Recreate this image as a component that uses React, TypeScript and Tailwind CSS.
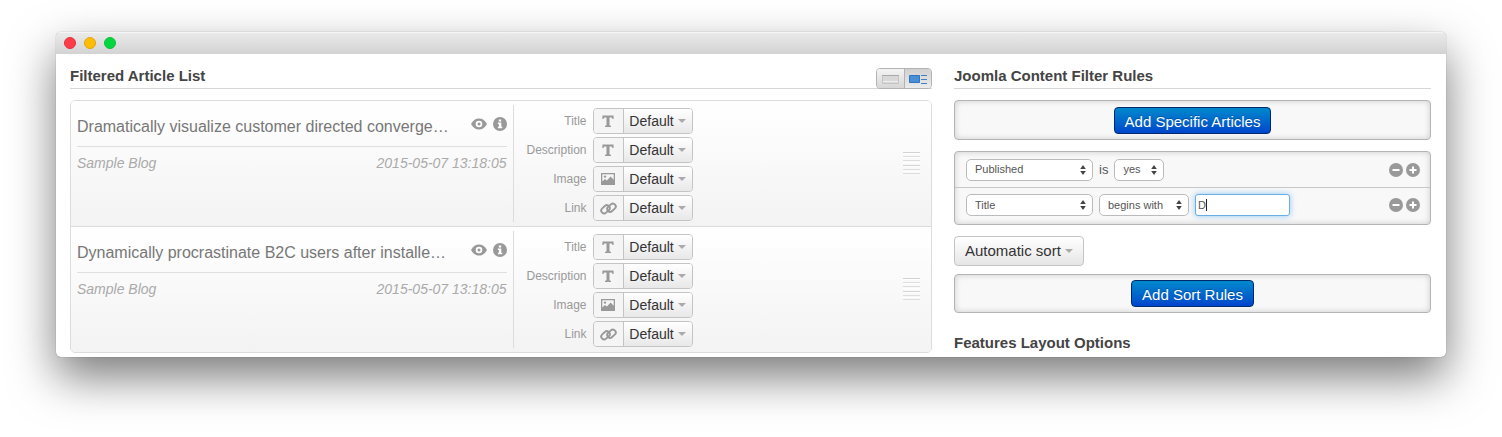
import { useId, type ReactNode } from "react";

const TextIcon = () => (
  <svg width="14" height="14" viewBox="0 0 14 14" fill="#999" aria-hidden="true">
    <path d="M1.500 1.500h11l.2 3.600h-1.200c-.3-1.100-.8-1.500-1.800-1.500H8.500v7.200c0 .7.3.9 1.500 1V13H4v-1.200c1.200-.1 1.500-.3 1.500-1V3.600H4.300c-1 0-1.500.4-1.800 1.500H1.300z" />
  </svg>
);

const ImageIcon = () => (
  <svg width="14" height="14" viewBox="0 0 14 14" aria-hidden="true">
    <path fill="#999" fillRule="evenodd" d="M0 1h14v12H0zM1.300 2.300v7.200l2.600-2.400 2 1.400 3.700-4 3.100 3.200V2.300z" />
    <circle cx="4" cy="4.600" r="1.200" fill="#999" />
  </svg>
);

const LinkIcon = () => (
  <svg width="17" height="13" viewBox="0 0 17 13" fill="none" stroke="#999" strokeWidth="1.900" aria-hidden="true">
    <rect x="0.800" y="4.400" width="9.400" height="5.800" rx="2.900" transform="rotate(-42 5.500 7.300)" />
    <rect x="6.800" y="2.800" width="9.400" height="5.800" rx="2.900" transform="rotate(-42 11.500 5.700)" />
  </svg>
);

const EyeIcon = () => (
  <svg width="16" height="12" viewBox="0 0 16 12" aria-hidden="true">
    <path fill="#999" d="M0 6C2.200 2.300 4.800.5 8 .5S13.800 2.300 16 6c-2.200 3.700-4.800 5.500-8 5.500S2.200 9.700 0 6z" />
    <circle cx="8" cy="6" r="3.300" fill="#fff" />
    <circle cx="8" cy="6" r="1.500" fill="#999" />
  </svg>
);

const InfoIcon = () => (
  <svg width="14" height="14" viewBox="0 0 14 14" aria-hidden="true">
    <circle cx="7" cy="7" r="7" fill="#999" />
    <path fill="#fff" d="M5.800 2.500h2.400v2H5.800zM4.900 5.400h3.400v4.300h1v1.600H4.900V9.700h1V7h-1z" />
  </svg>
);

const CircleIcon = ({ plus = false }: { plus?: boolean }) => (
  <svg width="14" height="14" viewBox="0 0 14 14" aria-hidden="true">
    <circle cx="7" cy="7" r="7" fill="#999" />
    <path stroke="#fff" strokeWidth="2" d={plus ? "M3.500 7h7M7 3.500v7" : "M3.500 7h7"} />
  </svg>
);

const Caret = () => (
  <svg width="8" height="4" viewBox="0 0 8 4" fill="#aaa" aria-hidden="true">
    <path d="M0 0h8L4 4z" />
  </svg>
);

const fields: { label: string; icon: ReactNode }[] = [
  { label: "Title", icon: <TextIcon /> },
  { label: "Description", icon: <TextIcon /> },
  { label: "Image", icon: <ImageIcon /> },
  { label: "Link", icon: <LinkIcon /> },
];

const articles = [
  "Dramatically visualize customer directed converge…",
  "Dynamically procrastinate B2C users after installe…",
];

function Field({ label, icon }: { label: string; icon: ReactNode }) {
  const id = useId();
  return (
    <div className="flex items-center gap-1.5">
      <label htmlFor={id} className="w-[73px] text-right text-xs text-[#999]">
        {label}
      </label>
      <div className="flex h-[26px] w-[100px] overflow-hidden rounded border border-[#c4c4c4]">
        <span className="flex w-[29px] shrink-0 items-center justify-center bg-[#f5f5f5]">{icon}</span>
        <button
          id={id}
          type="button"
          className="flex flex-1 items-center justify-center gap-1 border-l border-[#c4c4c4] bg-linear-to-b from-white to-[#e8e8e8] text-sm text-[#333]"
        >
          Default <Caret />
        </button>
      </div>
    </div>
  );
}

function Article({ title }: { title: string }) {
  return (
    <li className="flex h-[126px] items-stretch border-b border-[#dcdcdc] bg-linear-to-b from-white to-[#f3f3f3] pl-1.5 last:h-[125px] last:border-b-0">
      <div className="min-w-0 flex-1">
        <div className="flex h-[46px] items-center gap-1.5 border-b border-[#dfdfdf] pt-1.5">
          <h2 className="min-w-0 flex-1 truncate text-base text-[#777]">{title}</h2>
          <button type="button" aria-label="Preview" className="pb-1.5">
            <EyeIcon />
          </button>
          <button type="button" aria-label="Information" className="pb-1.5">
            <InfoIcon />
          </button>
        </div>
        <div className="flex justify-between pt-1.5 text-sm text-[#aaa] italic">
          <span>Sample Blog</span>
          <time>2015-05-07 13:18:05</time>
        </div>
      </div>
      <div className="my-1 ml-1.5 flex w-[49%] items-center justify-between border-l border-[#dcdcdc] pr-[11px]">
        <div className="flex h-[116px] flex-col justify-between pt-0.5">
          {fields.map((f) => (
            <Field key={f.label} {...f} />
          ))}
        </div>
        <svg width="17" height="23" viewBox="0 0 17 23" className="shrink-0" aria-hidden="true">
          <path stroke="#fff" d="M0 1.500h17M0 5.500h17M0 10.500h17M0 14.500h17M0 19.500h17" />
          <path stroke="#d2d2d2" d="M0 .5h17M0 13.500h17" />
          <path stroke="#dedede" d="M0 4.500h17M0 8.500h17M0 17.500h17M0 21.500h17" />
        </svg>
      </div>
    </li>
  );
}

function RuleSelect({ label, value, width }: { label: string; value: string; width: string }) {
  return (
    <span className={`relative flex h-[22px] ${width}`}>
      <select
        aria-label={label}
        defaultValue={value}
        className="w-full appearance-none rounded-[5px] border border-[#bbb] bg-white pl-2 text-[11px] text-[#555]"
      >
        <option>{value}</option>
      </select>
      <svg width="6" height="10" viewBox="0 0 6 10" fill="#444" className="pointer-events-none absolute top-1.5 right-[7px]" aria-hidden="true">
        <path d="M3 0l2.800 4H.2zM3 10L.2 6h5.600z" />
      </svg>
    </span>
  );
}

function RuleActions() {
  return (
    <div className="ml-auto flex gap-[3px]">
      <button type="button" aria-label="Remove rule">
        <CircleIcon />
      </button>
      <button type="button" aria-label="Add rule">
        <CircleIcon plus />
      </button>
    </div>
  );
}

const panel =
  "rounded border border-[#b4b4b4] bg-[#f8f8f8] shadow-[inset_0_0_6px_rgba(0,0,0,0.18)]";
const primary =
  "h-[27px] rounded border border-[#002a6c] bg-linear-to-b from-[#0088cc] to-[#0044cc] px-2.5 pt-0.5 text-[15px] leading-none text-white [text-shadow:0_-1px_0_rgba(0,0,0,0.25)]";
const heading = "h-[35px] border-b border-[#d6d6d6] pt-[11px] text-[15px] leading-[22px] font-bold text-[#444]";

export default function App() {
  return (
    <div className="bg-white px-14 pt-8 pb-20 font-['Liberation_Sans',Arial,sans-serif]">
      <div className="overflow-hidden rounded-[5px] bg-white shadow-[0_0_1px_rgba(0,0,0,0.5),0_20px_46px_rgba(0,0,0,0.52)]">
        <header className="flex h-[22px] items-center gap-2 bg-linear-to-b from-[#ebebeb] to-[#d3d3d3] px-2 shadow-[inset_0_1px_0_#f5f5f5]">
          <span className="size-3 rounded-full border border-[#e0323d] bg-[#fc3c46]" />
          <span className="size-3 rounded-full border border-[#e5a50c] bg-[#fdbc05]" />
          <span className="size-3 rounded-full border border-[#0fbf3c] bg-[#05d63f]" />
        </header>
        <main className="flex gap-[22px] pr-[15px] pb-1 pl-3.5">
          <section className="min-w-0 flex-[862]">
            <div className="flex h-[35px] items-end justify-between border-b border-[#d6d6d6]">
              <h1 className="self-start pt-[11px] text-[15px] leading-[22px] font-bold text-[#444]">Filtered Article List</h1>
              <div className="-mb-px flex h-[21px] w-14 overflow-hidden rounded border border-[#b3b3b3]">
                <button type="button" aria-label="List view" className="flex flex-1 items-center justify-center bg-linear-to-b from-[#f4f4f4] to-[#d6d6d6] pt-0.5">
                  <svg width="17" height="9" viewBox="0 0 17 9" aria-hidden="true">
                    <path fill="#d8d8d8" stroke="#c4c4c4" d="M.5.500h16v8H.5z" />
                    <path stroke="#aaa" d="M0 .5h17" />
                    <path stroke="#eee" d="M1 6.500h15" />
                  </svg>
                </button>
                <button type="button" aria-label="Detail view" className="flex flex-1 items-center justify-center border-l border-[#b3b3b3] bg-linear-to-b from-[#d0d0d0] to-[#ececec] pt-0.5">
                  <svg width="18" height="9" viewBox="0 0 18 9" aria-hidden="true">
                    <path fill="#4a8fd6" stroke="#2f74bd" d="M.5.500h10v7H.5z" />
                    <path stroke="#3f80c8" d="M12 .5h6M12 4.500h6M12 8.500h6" />
                  </svg>
                </button>
              </div>
            </div>
            <ul className="mt-[11px] overflow-hidden rounded-[5px] border border-[#dcdcdc]">
              {articles.map((t) => (
                <Article key={t} title={t} />
              ))}
            </ul>
          </section>

          <section className="min-w-0 flex-[477]">
            <h1 className={heading}>Joomla Content Filter Rules</h1>
            <div className={`mt-[11px] flex h-10 items-center justify-center ${panel}`}>
              <button type="button" className={primary}>Add Specific Articles</button>
            </div>

            <div className={`mt-[11px] ${panel}`}>
              <div className="flex h-9 items-center gap-1.5 border-b border-[#c8c8c8] pr-2.5 pl-[11px]">
                <RuleSelect label="Field" value="Published" width="w-[127px]" />
                <span className="text-[13px] text-[#555]">is</span>
                <RuleSelect label="State" value="yes" width="w-[50px]" />
                <RuleActions />
              </div>
              <div className="flex h-9 items-center gap-1.5 pr-2.5 pb-0.5 pl-[11px]">
                <RuleSelect label="Field" value="Title" width="w-[127px]" />
                <RuleSelect label="Comparison" value="begins with" width="w-[90px]" />
                <span className="relative flex h-[22px] w-[95px]">
                  <input
                    aria-label="Value"
                    defaultValue="D"
                    className="w-full rounded-[3px] border border-[#6aaee8] bg-white px-0.5 text-[11px] text-[#555] caret-transparent shadow-[0_0_6px_rgba(82,168,236,0.6)] outline-none"
                  />
                  <span className="absolute top-[5px] left-[11px] h-3 w-px bg-[#222]" />
                </span>
                <RuleActions />
              </div>
            </div>

            <button
              type="button"
              className="mt-[11px] flex h-[30px] items-center gap-1 rounded border border-[#c4c4c4] bg-linear-to-b from-white to-[#e6e6e6] px-2.5 text-[15px] text-[#333]"
            >
              Automatic sort <Caret />
            </button>

            <div className={`mt-2 flex h-[39px] items-center justify-center ${panel}`}>
              <button type="button" className={primary}>Add Sort Rules</button>
            </div>

            <h2 className="pt-5 text-[15px] leading-5 font-bold text-[#444]">Features Layout Options</h2>
          </section>
        </main>
      </div>
    </div>
  );
}
